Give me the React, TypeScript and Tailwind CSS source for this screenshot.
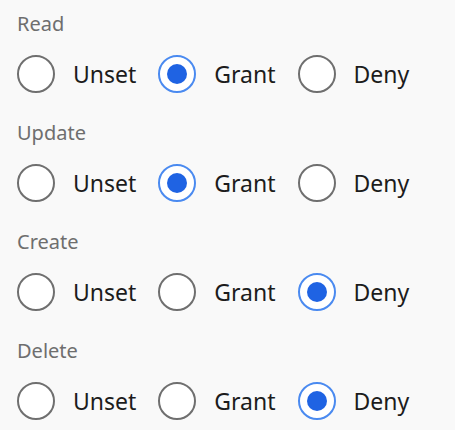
import { useState } from 'react';

type Choice = 'Unset' | 'Grant' | 'Deny';

const OPTIONS: Choice[] = ['Unset', 'Grant', 'Deny'];

const PERMS: { name: string; value: Choice }[] = [
  { name: 'Read', value: 'Grant' },
  { name: 'Update', value: 'Grant' },
  { name: 'Create', value: 'Deny' },
  { name: 'Delete', value: 'Deny' },
];

function Radio({ checked }: { checked: boolean }) {
  return checked ? (
    <span className="flex h-[38px] w-[38px] shrink-0 items-center justify-center rounded-full border-2 border-[#4a8af0] bg-white">
      <span className="h-[20px] w-[20px] rounded-full bg-[#1f63e3]" />
    </span>
  ) : (
    <span className="h-[38px] w-[38px] shrink-0 rounded-full border-2 border-[#6f6f6f] bg-white" />
  );
}

export default function App() {
  const [values, setValues] = useState(() => Object.fromEntries(PERMS.map((p) => [p.name, p.value])) as Record<string, Choice>);

  return (
    <div className="h-[430px] w-full bg-[#f9f9f9] px-[17px] pt-[10px]" style={{ fontFamily: '"Segoe UI", "Noto Sans", "Open Sans", sans-serif' }}>
      <div className="flex flex-col gap-[26px]">
        {PERMS.map((p) => (
          <div key={p.name} className="flex flex-col">
            <div className="h-[28px] text-[20px] leading-[28px] text-[#6e6e6e]">{p.name}</div>
            <div className="mt-[17px] flex h-[38px] items-center">
              {OPTIONS.map((o) => (
                <label key={o} className="mr-[22px] flex cursor-pointer items-center" onClick={() => setValues({ ...values, [p.name]: o })}>
                  <Radio checked={values[p.name] === o} />
                  <span className="ml-[18px] text-[23px] leading-[38px] text-[#1c1c1c]">{o}</span>
                </label>
              ))}
            </div>
          </div>
        ))}
      </div>
    </div>
  );
}
